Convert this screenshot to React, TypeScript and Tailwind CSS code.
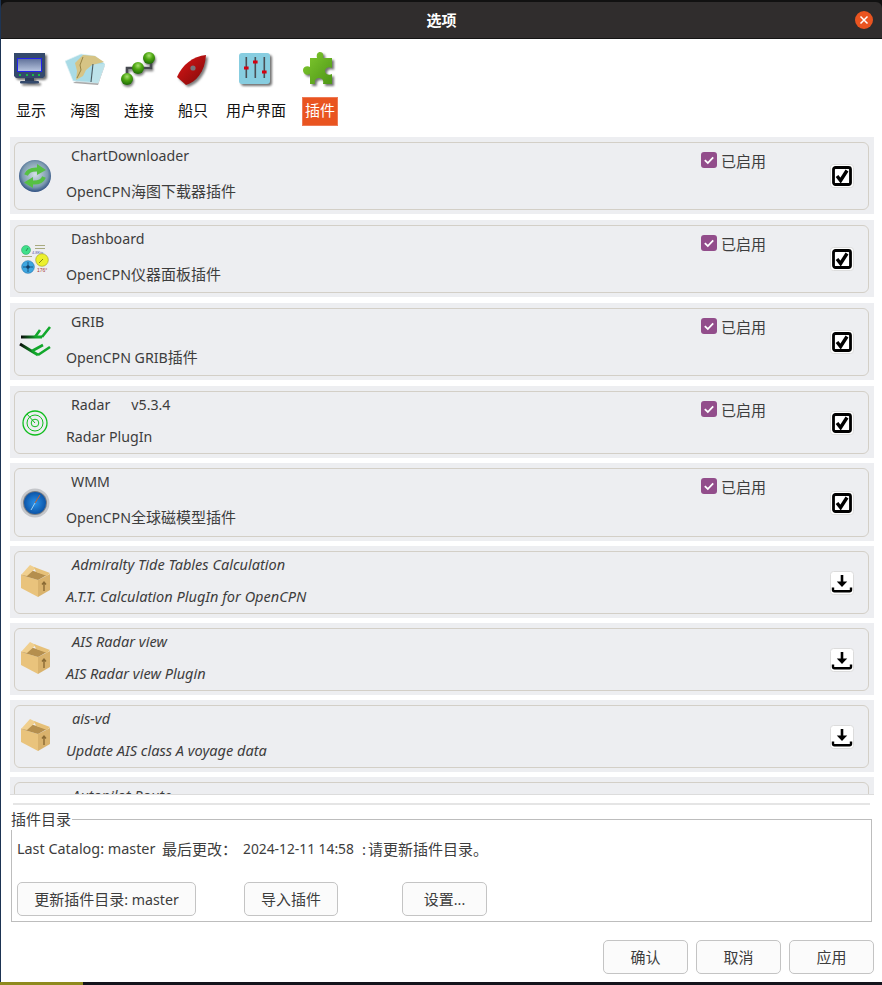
import type { ReactNode } from "react";

function MonitorIcon() {
  return (
    <svg width="40" height="40" viewBox="0 0 40 40" className="drop-shadow-[2px_2px_1px_rgba(0,0,0,0.55)]">
      <defs>
        <linearGradient id="screen" x1="0" y1="0" x2="0" y2="1">
          <stop offset="0" stopColor="#5f7099" />
          <stop offset="1" stopColor="#b9c6e0" />
        </linearGradient>
      </defs>
      <path d="M3 3h31v23l-2 2H5l-2-2z" fill="#34496c" />
      <rect x="6.5" y="8.5" width="24" height="13" fill="url(#screen)" stroke="#2323ee" />
      <rect x="8" y="24" width="2" height="2" fill="#18b84a" />
      <rect x="15" y="24" width="2" height="2" fill="#18b84a" />
      <rect x="21" y="24" width="2" height="2" fill="#18b84a" />
      <rect x="27" y="24" width="2" height="2" fill="#18b84a" />
      <rect x="14" y="28" width="9" height="3" fill="#2b3c58" />
      <rect x="9" y="31" width="19" height="2.5" rx="1" fill="#34496c" />
    </svg>
  );
}

function ChartIcon() {
  return (
    <svg width="40" height="40" viewBox="0 0 40 40">
      <path d="M8 33 33 35 40 15z" fill="#555" opacity="0.5" />
      <path d="M0 11 16 4 30 6 40 14 33 33 8 31z" fill="#a9dbe6" stroke="#e2f2f5" strokeWidth="0.7" />
      <path d="M28 14 40 14 33 33 26 32z" fill="#bde3ea" />
      <path d="M10 13 18 5 30 6 39 12 27 15 21 20 18 26 11 30 12 21z" fill="#d6c485" />
      <path d="M18 7 15 15 16 20 12 28" stroke="#8f7c3c" strokeWidth="0.9" fill="none" />
      <path d="M28 14 26 32" stroke="#4a5a60" strokeWidth="1.1" />
    </svg>
  );
}

function ConnectIcon() {
  return (
    <svg width="40" height="40" viewBox="0 0 40 40" className="drop-shadow-[1px_2px_1px_rgba(0,0,0,0.5)]">
      <defs>
        <radialGradient id="ball" cx="0.5" cy="0.3" r="0.7">
          <stop offset="0" stopColor="#a8e070" />
          <stop offset="0.45" stopColor="#4fa812" />
          <stop offset="1" stopColor="#1d6a06" />
        </radialGradient>
      </defs>
      <path d="M8 29V18h24V8" stroke="#46494f" strokeWidth="2.6" fill="none" />
      <circle cx="8" cy="29" r="6" fill="url(#ball)" />
      <circle cx="19" cy="18" r="6" fill="url(#ball)" />
      <circle cx="30" cy="8" r="6" fill="url(#ball)" />
    </svg>
  );
}

function BoatIcon() {
  return (
    <svg width="40" height="40" viewBox="0 0 40 40" className="drop-shadow-[2px_2px_1px_rgba(0,0,0,0.5)]">
      <defs>
        <linearGradient id="hull" x1="0" y1="0" x2="1" y2="1">
          <stop offset="0" stopColor="#e01616" />
          <stop offset="1" stopColor="#7c0a0a" />
        </linearGradient>
      </defs>
      <path d="M33 5C20 6 9 15 4 27l9 8c10-3 19-13 20-30z" fill="url(#hull)" />
      <circle cx="20" cy="18" r="2.6" fill="#77757a" />
    </svg>
  );
}

function SlidersIcon() {
  return (
    <svg width="40" height="40" viewBox="0 0 40 40" className="drop-shadow-[2px_2px_1px_rgba(0,0,0,0.55)]">
      <rect x="3" y="3" width="31" height="31" rx="3" fill="#87cde0" />
      <rect x="9.5" y="7" width="1.6" height="21" fill="#4a4f55" />
      <rect x="18.5" y="7" width="1.6" height="21" fill="#4a4f55" />
      <rect x="27.5" y="7" width="1.6" height="21" fill="#4a4f55" />
      <rect x="8" y="16.5" width="4.6" height="3" fill="#d40010" />
      <rect x="17" y="10.5" width="4.6" height="3" fill="#d40010" />
      <rect x="26" y="20.5" width="4.6" height="3" fill="#d40010" />
    </svg>
  );
}

function PuzzleIcon() {
  return (
    <svg width="40" height="40" viewBox="0 0 40 40" className="drop-shadow-[2px_2px_1px_rgba(0,0,0,0.55)]">
      <defs>
        <linearGradient id="piece" x1="0" y1="0" x2="1" y2="1">
          <stop offset="0" stopColor="#83cc30" />
          <stop offset="1" stopColor="#4d9616" />
        </linearGradient>
      </defs>
      <path
        d="M10 8h7c-1-4 1-6 3-6 3 0 4 3 3 6h9v10c-3-2-7 0-7 3s4 5 7 3v10h-9c1-4-1-6-4-6s-5 2-4 6h-5V24c-3 2-7 0-7-4 0-3 4-5 7-3z"
        fill="url(#piece)"
      />
    </svg>
  );
}

function SyncIcon() {
  return (
    <svg width="32" height="32" viewBox="0 0 32 32">
      <defs>
        <radialGradient id="globe" cx="0.5" cy="0.45" r="0.55">
          <stop offset="0" stopColor="#d4e0e6" />
          <stop offset="0.72" stopColor="#7d9bb0" />
          <stop offset="1" stopColor="#2f4f82" />
        </radialGradient>
      </defs>
      <circle cx="16" cy="16" r="16" fill="url(#globe)" />
      <path d="M7 15C9 10 13 9 19 9.500" stroke="#56c043" strokeWidth="4" fill="none" />
      <path d="M18 4 27 10 18 15z" fill="#56c043" />
      <path d="M25 17C23 22 19 23 13 22.500" stroke="#56c043" strokeWidth="4" fill="none" />
      <path d="M14 17 5 22.500 14 28z" fill="#56c043" />
    </svg>
  );
}

function DashboardIcon() {
  return (
    <svg width="32" height="32" viewBox="0 0 32 32">
      <rect x="16" y="2" width="10" height="1" fill="#a8aa80" />
      <rect x="16" y="5" width="10" height="1" fill="#a8aa80" />
      <rect x="3" y="13" width="10" height="1" fill="#a8aa80" />
      <text x="13" y="10.500" fontSize="4" fill="#5858a8" fontFamily="'Liberation Sans', sans-serif">4.8Kts</text>
      <circle cx="7" cy="7" r="4.500" fill="#3fe08a" stroke="#2a9a60" strokeWidth="0.5" />
      <path d="M7 8l2-3" stroke="#1c6a40" strokeWidth="0.7" />
      <circle cx="9" cy="24" r="6.300" fill="#3ea6e0" stroke="#1f6fa8" strokeWidth="0.6" />
      <path d="M9 19v10M4 24h10" stroke="#12406a" strokeWidth="0.8" />
      <circle cx="9" cy="24" r="1.800" fill="#12406a" />
      <circle cx="23" cy="17" r="6.300" fill="#ecf02e" stroke="#9a9a20" strokeWidth="0.6" />
      <path d="M20 20l4-4" stroke="#6a6a10" strokeWidth="0.8" />
      <text x="18" y="29" fontSize="5" fill="#a83838" fontFamily="'Liberation Sans', sans-serif">176°</text>
    </svg>
  );
}

function GribIcon() {
  return (
    <svg width="32" height="32" viewBox="0 0 32 32" fill="none">
      <defs>
        <linearGradient id="barbA" gradientUnits="userSpaceOnUse" x1="2" y1="0" x2="18" y2="0">
          <stop offset="0" stopColor="#0a0a0a" />
          <stop offset="1" stopColor="#12a82c" />
        </linearGradient>
        <linearGradient id="barbB" gradientUnits="userSpaceOnUse" x1="1" y1="0" x2="16" y2="0">
          <stop offset="0" stopColor="#0a0a0a" />
          <stop offset="1" stopColor="#12a82c" />
        </linearGradient>
      </defs>
      <path d="M2 11H23" stroke="url(#barbA)" strokeWidth="3" />
      <path d="M23 11 31 1M16 11 21 4" stroke="#12a82c" strokeWidth="2.600" />
      <path d="M1 18 19 29" stroke="url(#barbB)" strokeWidth="3" />
      <path d="M19 29 31 21M13 25 24 19" stroke="#12a82c" strokeWidth="2.600" />
    </svg>
  );
}

function RadarIcon() {
  return (
    <svg width="32" height="32" viewBox="0 0 32 32" fill="none" stroke="#10bd1e">
      <circle cx="16" cy="16" r="12" strokeWidth="1.300" />
      <circle cx="16" cy="16" r="8" strokeWidth="1" />
      <circle cx="16" cy="16" r="3.800" strokeWidth="1" />
      <path d="M16 16 8 7" strokeWidth="1" />
    </svg>
  );
}

function CompassIcon() {
  return (
    <svg width="32" height="32" viewBox="0 0 32 32">
      <defs>
        <radialGradient id="dial" cx="0.5" cy="0.5" r="0.5">
          <stop offset="0" stopColor="#2a92ea" />
          <stop offset="1" stopColor="#0d55a8" />
        </radialGradient>
      </defs>
      <circle cx="16" cy="16" r="14.500" fill="#c4c6ca" />
      <circle cx="16" cy="16" r="12" fill="#777c84" />
      <circle cx="16" cy="16" r="11" fill="url(#dial)" />
      <path d="M21 8 16 16" stroke="#c8602c" strokeWidth="1" />
      <path d="M16 16 12 23" stroke="#9fd0f0" strokeWidth="1" />
    </svg>
  );
}

function BoxIcon() {
  return (
    <svg width="32" height="34" viewBox="0 0 32 34" className="-mt-[3px]">
      <path d="M2 11 19 16V33L2 24z" fill="#e9c37c" />
      <path d="M19 16 31 10V26L19 33z" fill="#d9b26c" />
      <path d="M2 11 11 6 28 11 19 16z" fill="#b58f4e" />
      <path d="M2 11 11 1 17 4 8 12z" fill="#f0cf8e" />
      <path d="M15 3 31 9 28 12 17 8z" fill="#e6c078" />
      <path d="M25 27V18M23 20.500 25 18l2 2.500" stroke="#8a6a34" strokeWidth="1.400" fill="none" />
    </svg>
  );
}

function CheckTool() {
  return (
    <svg width="24" height="24" viewBox="0 0 24 24">
      <rect x="0.5" y="0.5" width="23" height="23" rx="3" fill="#fff" stroke="#dcdcdc" />
      <rect x="3.500" y="3.500" width="17" height="17" rx="2" fill="#fff" stroke="#000" strokeWidth="2.800" />
      <path d="M7 12l3.600 4.500L17 6.500" stroke="#000" strokeWidth="3.400" fill="none" />
    </svg>
  );
}

function DownloadTool() {
  return (
    <svg width="24" height="24" viewBox="0 0 24 24">
      <rect x="0.5" y="0.5" width="23" height="23" rx="3" fill="#fff" stroke="#dcdcdc" />
      <path d="M12 4v9" stroke="#000" strokeWidth="2.600" />
      <path d="M6.800 10.500h10.400L12 16z" fill="#000" />
      <path d="M3 16.500v2.200a1.500 1.500 0 0 0 1.500 1.500h15a1.500 1.500 0 0 0 1.500-1.500v-2.200" stroke="#000" strokeWidth="2.400" fill="none" />
    </svg>
  );
}

function T({ children }: { children: string }) {
  const parts = children.split(/([\u3000-\u9fff\uff00-\uffef]+)/);
  return (
    <>
      {parts.map((part, i) =>
        i % 2 === 1 ? <span key={i}>{part}</span> : <span key={i} className="text-[14.2px]">{part}</span>
      )}
    </>
  );
}

function Enabled() {
  return (
    <div className="flex w-[129px] shrink-0 items-center gap-[4px] self-start pt-[7px]">
      <svg width="16" height="16" viewBox="0 0 16 16" className="-mt-[2px]">
        <rect width="16" height="16" rx="3" fill="#924d8b" />
        <path d="M3.800 8.200 6.800 11l5.400-5.600" stroke="#fff" strokeWidth="1.800" fill="none" />
      </svg>
      <span className="leading-[22px]">已启用</span>
    </div>
  );
}

type Plugin = {
  name: string;
  version?: string;
  desc: string;
  icon: ReactNode;
  installed: boolean;
  outer: string;
  gap: string;
};

const plugins: Plugin[] = [
  { name: "ChartDownloader", desc: "OpenCPN海图下载器插件", icon: <SyncIcon />, installed: true, outer: "h-[77px] mb-[6px]", gap: "gap-[13px]" },
  { name: "Dashboard", desc: "OpenCPN仪器面板插件", icon: <DashboardIcon />, installed: true, outer: "h-[77px] mb-[6px]", gap: "gap-[13px]" },
  { name: "GRIB", desc: "OpenCPN GRIB插件", icon: <GribIcon />, installed: true, outer: "h-[77px] mb-[6px]", gap: "gap-[13px]" },
  { name: "Radar", version: "v5.3.4", desc: "Radar PlugIn", icon: <RadarIcon />, installed: true, outer: "h-[72px] mb-[5px]", gap: "gap-[9px]" },
  { name: "WMM", desc: "OpenCPN全球磁模型插件", icon: <CompassIcon />, installed: true, outer: "h-[78px] mb-[5px]", gap: "gap-[13px]" },
  { name: "Admiralty Tide Tables Calculation", desc: "A.T.T. Calculation PlugIn for OpenCPN", icon: <BoxIcon />, installed: false, outer: "h-[72px] mb-[5px]", gap: "gap-[10px]" },
  { name: "AIS Radar view", desc: "AIS Radar view Plugin", icon: <BoxIcon />, installed: false, outer: "h-[72px] mb-[5px]", gap: "gap-[10px]" },
  { name: "ais-vd", desc: "Update AIS class A voyage data", icon: <BoxIcon />, installed: false, outer: "h-[72px] mb-[5px]", gap: "gap-[10px]" },
  { name: "Autopilot Route", desc: "Autopilot Route Plugin", icon: <BoxIcon />, installed: false, outer: "h-[72px] mb-[5px]", gap: "gap-[10px]" },
];

function PluginRow({ p }: { p: Plugin }) {
  return (
    <div className={`${p.outer} shrink-0 bg-[#edeef1] pt-[5px] pr-[5px] pb-[4px] pl-[4px]`}>
      <div className="flex h-full items-center rounded-[6px] border border-[#d3cfc7]">
        <div className="ml-[4px] flex w-[32px] shrink-0 justify-center">{p.icon}</div>
        {p.installed ? (
          <div className={`ml-[15px] flex min-w-0 flex-1 flex-col self-stretch pt-[1px] ${p.gap}`}>
            <div className="pl-[5px] leading-[22px]">
              <T>{p.name}</T>
              {p.version && <span className="ml-[21px] text-[14.2px]">{p.version}</span>}
            </div>
            <div className="leading-[22px]">
              <T>{p.desc}</T>
            </div>
          </div>
        ) : (
          <div className={`ml-[15px] flex min-w-0 flex-1 flex-col self-stretch pt-[1px] text-[14.55px] italic ${p.gap}`}>
            <div className="pl-[6px] leading-[22px]">{p.name}</div>
            <div className="leading-[22px]">{p.desc}</div>
          </div>
        )}
        {p.installed && <Enabled />}
        <div className="mr-[14px] shrink-0 leading-none">
          {p.installed ? <CheckTool /> : <DownloadTool />}
        </div>
      </div>
    </div>
  );
}

const tabs = [
  { label: "显示", icon: <MonitorIcon />, width: "w-[54px]" },
  { label: "海图", icon: <ChartIcon />, width: "w-[54px]" },
  { label: "连接", icon: <ConnectIcon />, width: "w-[54px]" },
  { label: "船只", icon: <BoatIcon />, width: "w-[54px]" },
  { label: "用户界面", icon: <SlidersIcon />, width: "w-[72px]" },
  { label: "插件", icon: <PuzzleIcon />, width: "w-[56px]" },
];

function Btn({ className, children }: { className: string; children: ReactNode }) {
  return (
    <button className={`h-[34px] rounded-[5px] border border-[#c4c4c4] bg-[#fbfbfb] text-[#3d3d3d] ${className}`}>
      {children}
    </button>
  );
}

export default function App() {
  return (
    <div className="flex h-[985px] w-[882px] flex-col overflow-hidden bg-[#1d3454] font-['Noto_Sans','Noto_Sans_CJK_SC',sans-serif] text-[15px] text-[#3d3d3d]">
      <div className="ml-[1px] flex h-[982px] flex-col bg-white">
        {/* title bar */}
        <div className="shrink-0 bg-[#111] pt-[2px]">
          <div className="relative flex h-[37px] items-center justify-center rounded-t-[6px] border-b border-[#141414] bg-[#302d2d] pt-[1px] text-[15px] font-semibold text-white">
            选项
            <div className="absolute top-[9px] right-[9px] flex h-[18px] w-[18px] items-center justify-center rounded-full bg-[#e95420]">
              <svg width="10" height="10" viewBox="0 0 10 10">
                <path d="M1.500 1.500l7 7M8.500 1.500l-7 7" stroke="#fff" strokeWidth="1.500" />
              </svg>
            </div>
          </div>
        </div>

        {/* toolbar */}
        <div className="flex h-[98px] shrink-0 pt-[11px] pl-[3px]">
          {tabs.map((t, i) => (
            <div key={t.label} className={`${t.width} flex flex-col items-center`}>
              <div className="h-[36px] w-[40px]">{t.icon}</div>
              <div
                className={
                  i === 5
                    ? "mt-[11px] flex h-[29px] w-[36px] items-center justify-center border border-[#ee7a55] bg-[#e95420] pb-[2px] text-white"
                    : "mt-[11px] flex h-[29px] items-center justify-center pb-[2px] text-[#111]"
                }
              >
                {t.label}
              </div>
            </div>
          ))}
        </div>

        {/* plugin list */}
        <div className="ml-[9px] mr-[8px] flex h-[658px] shrink-0 flex-col overflow-hidden border-b border-[#dcdcdc]">
          {plugins.map((p) => (
            <PluginRow key={p.name} p={p} />
          ))}
        </div>

        {/* catalog */}
        <div className="mt-[8px] ml-[12px] mr-[12px] h-[2px] shrink-0 bg-[#e5e5e5]" />
        <fieldset className="mt-[3px] ml-[10px] mr-[10px] h-[114px] shrink-0 border border-[#bdbdbd] px-[5px]">
          <legend className="-ml-[6px] p-0 pr-[1px] leading-[22px]">插件目录</legend>
          <div className="mt-[8px] flex leading-[22px] whitespace-nowrap">
            <span className="w-[145px] text-[14.4px]">Last Catalog: master</span>
            <span className="w-[81px]">最后更改：</span>
            <span className="w-[119px] text-[13.8px]">2024-12-11 14:58</span>
            <span className="w-[6px]">:</span>
            <span>请更新插件目录。</span>
          </div>
          <div className="mt-[22px] flex">
            <Btn className="w-[179px]">
              <T>更新插件目录: master</T>
            </Btn>
            <Btn className="ml-[48px] w-[94px]">导入插件</Btn>
            <Btn className="ml-[64px] w-[85px]">
              <T>设置...</T>
            </Btn>
          </div>
        </fieldset>

        {/* dialog buttons */}
        <div className="mt-[18px] mr-[8px] flex justify-end gap-[8px]">
          <Btn className="w-[85px]">确认</Btn>
          <Btn className="w-[85px]">取消</Btn>
          <Btn className="w-[85px]">应用</Btn>
        </div>
      </div>

      {/* desktop behind the dialog */}
      <div className="flex h-[3px] bg-[#14141c]">
        <div className="w-[83px] bg-[#8f8a1e]" />
      </div>
    </div>
  );
}
